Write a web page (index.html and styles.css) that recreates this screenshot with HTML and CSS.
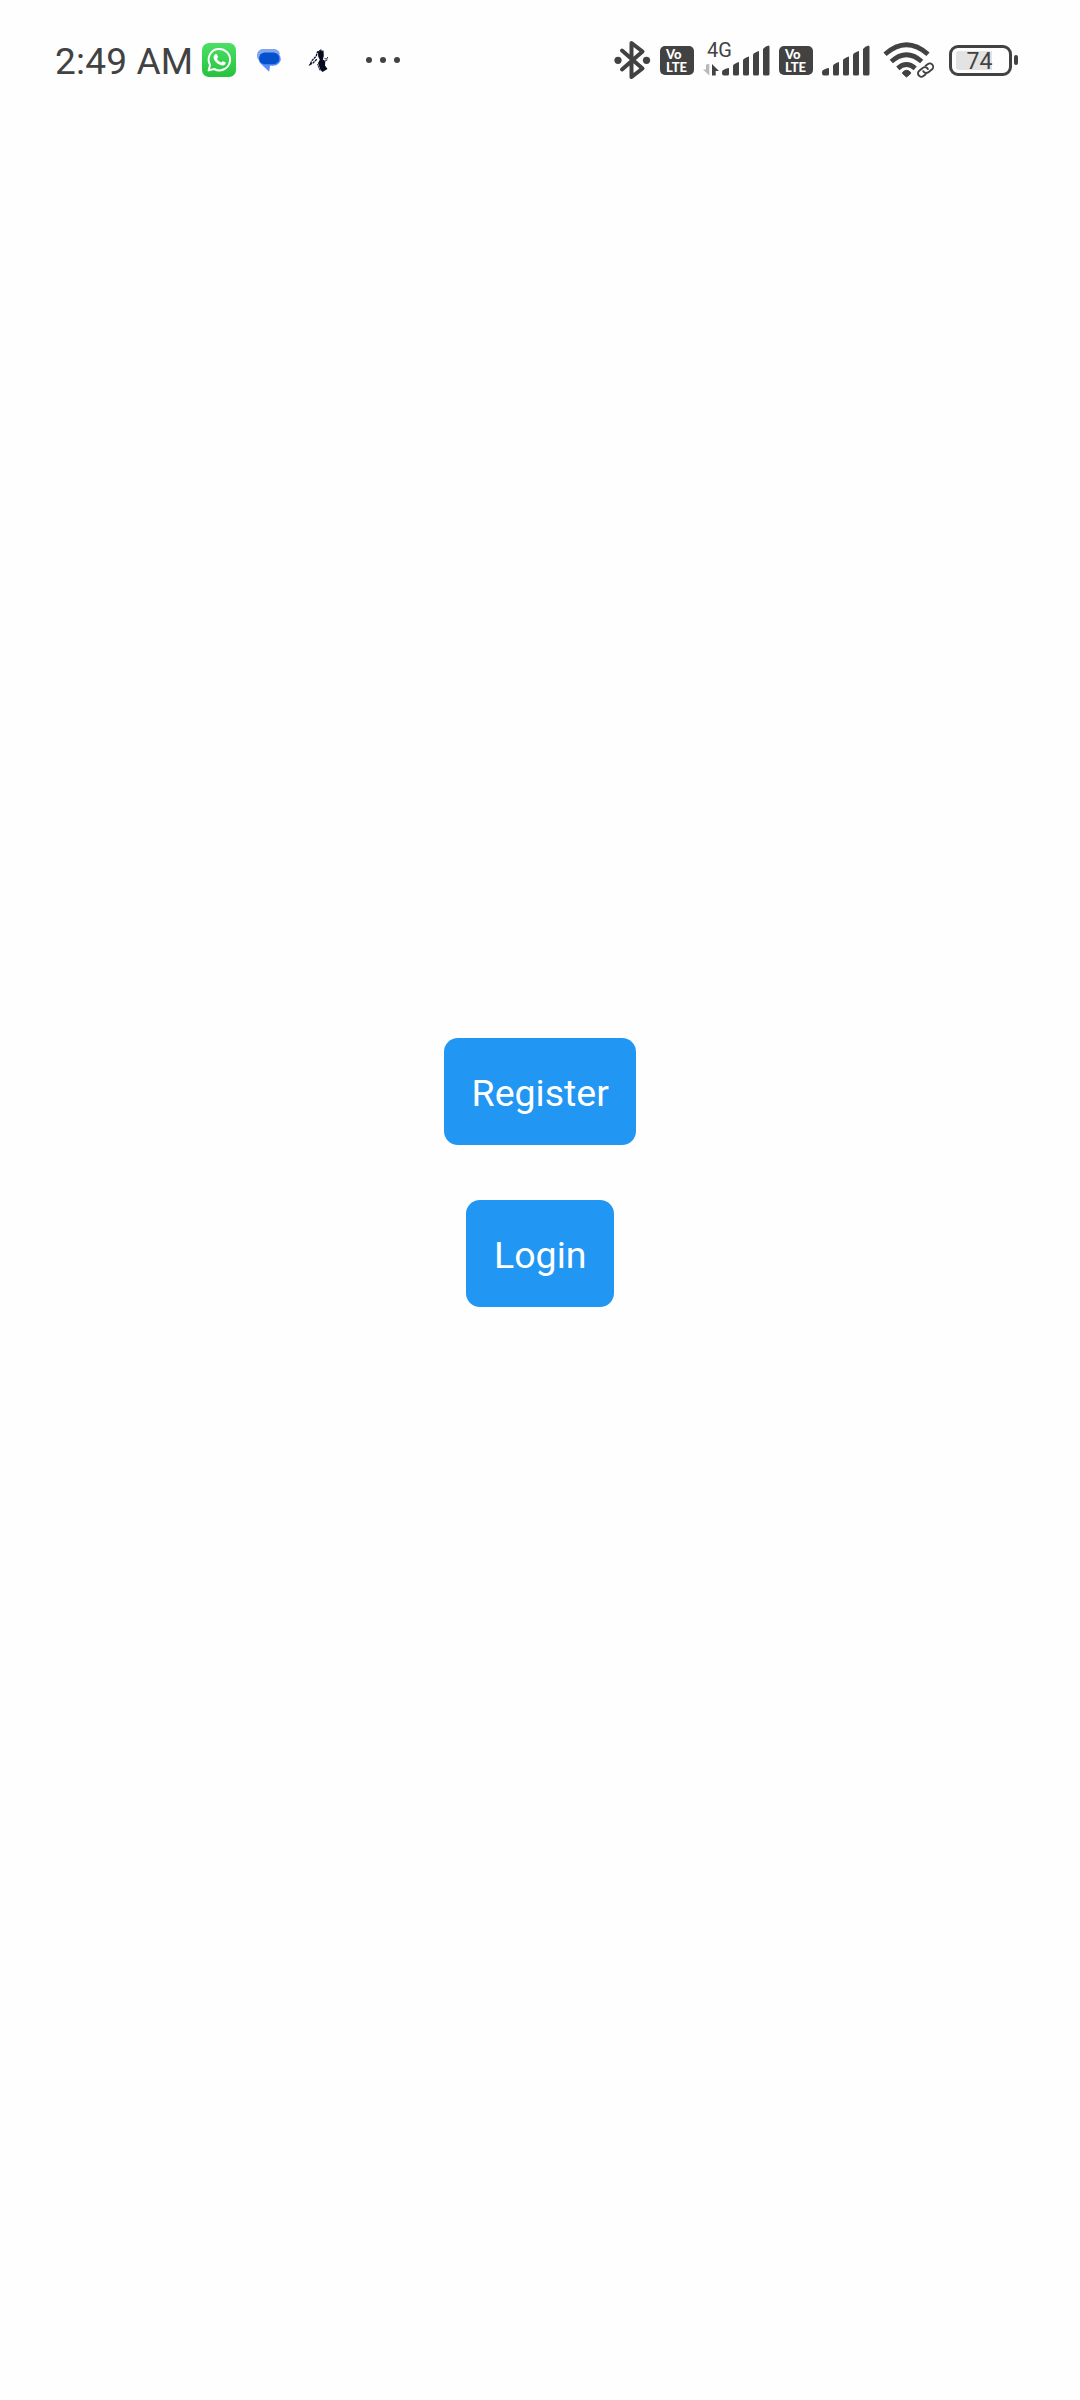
FILE: index.html
```html
<!DOCTYPE html>
<html lang="en">
<head>
<meta charset="utf-8">
<title>Welcome</title>
<link rel="stylesheet" href="styles.css">
</head>
<body>
<header class="status-bar">
  <div class="status-left">
    <span class="time">2:49 AM</span>
    <svg class="app-icon" viewBox="0 0 34 34">
      <defs><linearGradient id="wa" x1="0" y1="0" x2="0" y2="1"><stop offset="0" stop-color="#4be065"/><stop offset="1" stop-color="#25c33e"/></linearGradient></defs>
      <rect width="34" height="34" rx="7" fill="url(#wa)"/>
      <path d="M6.600 27.400l1.500-5.400a10.700 10.700 0 1 1 4.100 4z" fill="none" stroke="#fff" stroke-width="2" stroke-linejoin="round"/>
      <path d="M13.100 11.300c.5-.5 1.600-.5 1.900.2l1 2.300c.3.8-1 1.500-.9 2.100.7 1.500 2.200 2.800 3.900 3.500.6.1 1.300-1.400 2-1.200l2.300 1.100c.6.400.3 1.800-.5 2.500-1.300 1.200-3.500.8-5.500-.2-2.600-1.300-5-4-5.600-6.200-.4-1.600.2-3.100 1.400-4.100z" fill="#fff"/>
    </svg>
    <svg class="app-icon" viewBox="0 0 34 34">
      <path d="M11 6h10c4 0 6.500 2 6.900 5l-7.900 5-13 1.500C5.400 16 4.800 14 5 12c.3-3.500 2.700-6 6-6z" fill="#82a5ef"/>
      <path d="M26.500 11q2.500 1.800 2.300 5.200c-.3 3.700-3.500 6.200-7.200 6.600H18l-.8 6-8.700-8.400L7 18l14-6z" fill="#5b8df8"/>
      <rect x="7" y="9.600" width="20.300" height="11.600" rx="5.800" fill="#0451ce"/>
    </svg>
    <svg class="app-icon" viewBox="0 0 34 34">
      <path d="M16 9l1.500-1 4-.5.300 5.500-1 3.500 2.500 1.500-.3 4.500 2.500 3.500-5 3-2-2-2.500-7 1.800-3.200-1.600-3.300z" fill="#080b20"/>
      <path d="M19.500 6.800L15.500 9l-1.300 4-4.200 4.500-2 4 3-1.500 4-4" fill="none" stroke="#080b20" stroke-width="1.300" stroke-dasharray="2.500 .7"/>
      <path d="M22.500 15.500q2.500 2 3.300-1.500M22.500 18.300l3-1.500M15.500 21l2.500 6.500" fill="none" stroke="#33364a" stroke-width="1"/>
    </svg>
    <svg class="more" viewBox="0 0 34 34"><g fill="#424242"><circle cx="3" cy="17" r="3"/><circle cx="17" cy="17" r="3"/><circle cx="31" cy="17" r="3"/></g></svg>
  </div>
  <div class="status-right">
    <svg class="bluetooth" viewBox="0 0 37 40">
      <path d="M8 10.500l20.500 18L17.500 37V3L28.500 11.500 8 29.500" fill="none" stroke="#424242" stroke-width="4" stroke-linejoin="round" stroke-linecap="round"/>
      <circle cx="4" cy="20.300" r="3.600" fill="#424242"/><circle cx="32.500" cy="20.300" r="3.600" fill="#424242"/>
    </svg>
    <div class="volte"><span class="volte-top">Vo</span><span class="volte-bottom">LTE</span></div>
    <div class="mobile">
      <span class="network">4G</span>
      <svg class="arrows" viewBox="0 0 16 12"><path d="M0 5.500h3V1.200q0-1.200 3.300-1.200v11.500z" fill="#b8b8b8"/><path d="M9 0l7 7h-3.300v4.500H9z" fill="#424242"/></svg>
      <svg class="bars" viewBox="0 0 48 31"><g fill="#424242"><path d="M0 28v-1.500q1-2.500 7-3.500v6q0 1.500-1.500 1.500H2q-2 0-2-2.500z"/><path d="M11 20.500q1-2 6-3.500v12q0 1.500-1.500 1.500h-3q-1.500 0-1.500-1.500z"/><path d="M21 15q1-2 6-3.500V29q0 1.500-1.500 1.500h-3Q21 30.500 21 29z"/><path d="M31 9.500q1-2 6-3.500v23q0 1.500-1.500 1.500h-3Q31 30.500 31 29z"/><path d="M41 4q2-3 5.500-3.500 1 0 1 1.500v27q0 1.500-1.500 1.500h-3.500Q41 30.500 41 29z"/></g></svg>
    </div>
    <div class="volte second"><span class="volte-top">Vo</span><span class="volte-bottom">LTE</span></div>
    <svg class="bars second-bars" viewBox="0 0 48 31"><g fill="#424242"><path d="M0 28v-1.500q1-2.500 7-3.500v6q0 1.500-1.500 1.500H2q-2 0-2-2.500z"/><path d="M11 20.500q1-2 6-3.500v12q0 1.500-1.500 1.500h-3q-1.500 0-1.500-1.500z"/><path d="M21 15q1-2 6-3.500V29q0 1.500-1.500 1.500h-3Q21 30.500 21 29z"/><path d="M31 9.500q1-2 6-3.500v23q0 1.500-1.500 1.500h-3Q31 30.500 31 29z"/><path d="M41 4q2-3 5.500-3.500 1 0 1 1.500v27q0 1.500-1.500 1.500h-3.500Q41 30.500 41 29z"/></g></svg>
    <svg class="wifi" viewBox="0 0 51 36">
      <g fill="none" stroke="#424242" stroke-width="4.800"><path d="M2 12.300q21.500-19 43 0"/><path d="M8.300 19.500q15.200-13.400 30.400 0"/><path d="M14.800 26.300q8.700-7.400 17.400 0"/></g>
      <path d="M19.500 30.500q4.100-4.500 8.200 0l-.2 1.200-4 3.300-3.800-3.300z" fill="#424242" stroke="#424242"/>
      <g transform="rotate(-38 42.500 28)" fill="none"><g stroke="#fff" stroke-width="5"><rect x="34.500" y="24.800" width="9" height="6.400" rx="3.200"/></g><g stroke="#424242" stroke-width="1.900"><path d="M40.500 31.500H37.200a3.400 3.400 0 0 1 0-6.800h4.700a3.400 3.400 0 0 1 2.900 4.700"/><path d="M44.500 24.700h3.300a3.400 3.400 0 0 1 0 6.800h-4.700a3.400 3.400 0 0 1-2.900-4.700"/></g></g>
    </svg>
    <div class="battery"><div class="battery-shell"><div class="battery-level"></div><span class="battery-text">74</span></div><div class="battery-tip"></div></div>
  </div>
</header>
<main class="actions">
  <button class="button">Register</button>
  <button class="button">Login</button>
</main>
</body>
</html>
```
FILE: styles.css
```css
* { box-sizing: border-box; }
body {
  margin: 0;
  height: 2400px;
  display: flex;
  flex-direction: column;
  background: #fefefe;
  font-family: Roboto, sans-serif;
}
svg { display: block; flex: none; }
.status-bar {
  height: 120px;
  padding: 0 62px 0 55px;
  display: flex;
  justify-content: space-between;
  align-items: center;
  color: #424242;
}
.status-left, .status-right { display: flex; align-items: center; }
.time {
  width: 147px;
  font-size: 37px;
  font-weight: 450;
  line-height: 42px;
  letter-spacing: 0.200px;
  padding-top: 4px;
  white-space: nowrap;
}
.app-icon { width: 34px; height: 34px; margin-right: 16px; }
.more { width: 34px; height: 34px; margin-left: 14px; }
.bluetooth { width: 37px; height: 40px; }
.volte {
  width: 34px;
  height: 29px;
  margin-left: 9px;
  padding: 2px 0 0 6px;
  border-radius: 5px;
  background: #424242;
  color: #fff;
  display: flex;
  flex-direction: column;
  font-family: Lato, sans-serif;
  font-weight: 900;
  font-size: 13px;
  line-height: 13px;
}
.mobile {
  margin-left: 9px;
  height: 36px;
  display: grid;
  grid-template-columns: 16px 48px;
  grid-template-rows: 22px 14px;
  column-gap: 3px;
}
.network { grid-area: 1 / 1 / 2 / 3; font-size: 20px; line-height: 17px; padding-left: 4px; }
.arrows { grid-area: 2 / 1; width: 16px; height: 12px; }
.bars { width: 48px; height: 31px; }
.mobile .bars { grid-area: 1 / 2 / 3 / 3; align-self: end; margin-bottom: 2px; }
.second { margin-left: 9px; }
.second-bars { margin-left: 9px; }
.wifi { width: 51px; height: 36px; margin-left: 13px; }
.battery { display: flex; align-items: center; margin-left: 15px; gap: 2px; }
.battery-shell {
  width: 63px;
  height: 31px;
  padding: 3px 4px;
  border: 3px solid #424242;
  border-radius: 9px;
  display: grid;
}
.battery-level { grid-area: 1 / 1; width: 36px; height: 19px; background: #e3e3e3; border-radius: 3px 0 0 3px; }
.battery-text { grid-area: 1 / 1; font-size: 23px; font-weight: 450; line-height: 21px; text-align: center; padding-right: 2px; }
.battery-tip { width: 4px; height: 10px; border-radius: 2px; background: #424242; }
.actions {
  display: flex;
  flex-direction: column;
  align-items: center;
  gap: 55px;
  padding-top: 918px;
}
.button {
  height: 107px;
  padding: 3px 27.500px 0 28px;
  border: 0;
  border-radius: 14px;
  background: #2196f3;
  color: #fff;
  font: 400 37.500px Roboto, sans-serif;
}
```
